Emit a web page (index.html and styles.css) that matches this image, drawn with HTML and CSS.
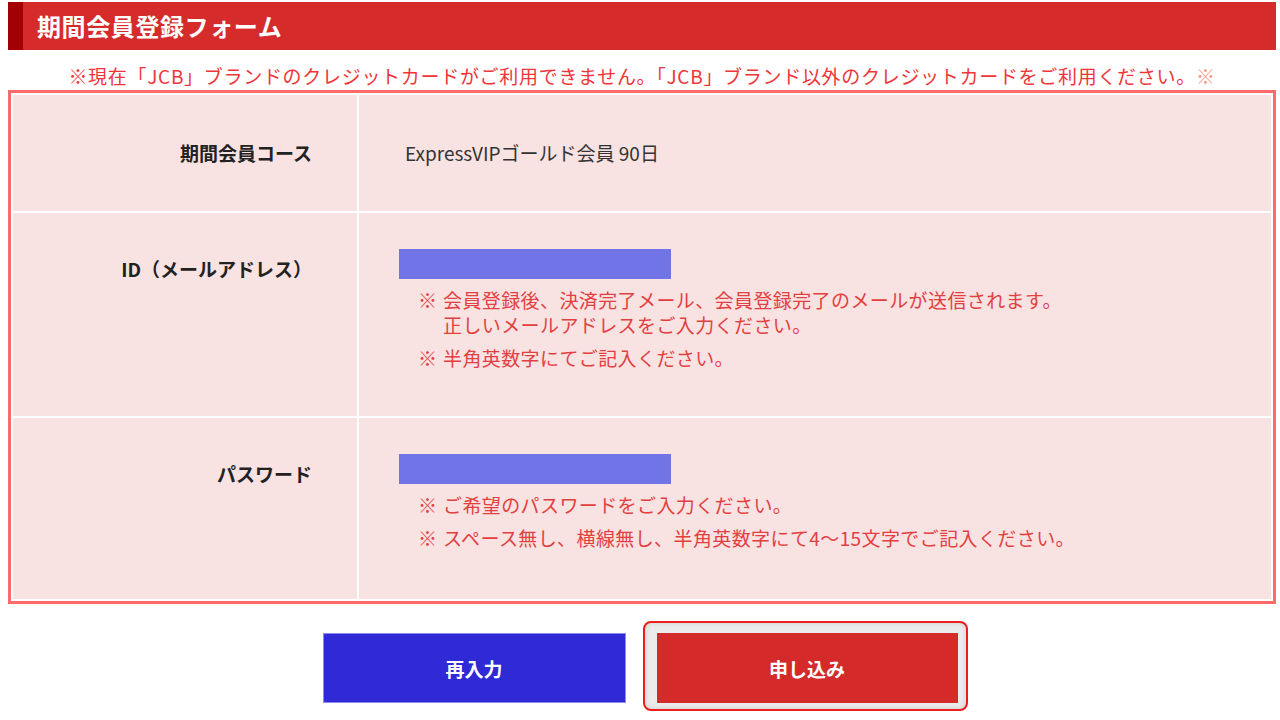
FILE: index.html
```html
<!DOCTYPE html>
<html lang="ja">
<head>
    <meta charset="UTF-8">
    <meta name="viewport" content="width=device-width, initial-scale=1.0">
    <title>期間会員登録フォーム</title>
    <link rel="stylesheet" href="styles.css">
</head>
<body>
    <div class="container">
        <h1 class="form-title">期間会員登録フォーム</h1>
        <p class="notice">※現在「JCB」ブランドのクレジットカードがご利用できません。「JCB」ブランド以外のクレジットカードをご利用ください。<span class="notice-end">※</span></p>
        <table class="form-table">
            <tr class="row-course">
                <th>期間会員コース</th>
                <td><span class="course">ExpressVIPゴールド会員 90日</span></td>
            </tr>
            <tr>
                <th>ID（メールアドレス）</th>
                <td>
                    <div class="masked"></div>
                    <ul class="notes">
                        <li><span class="mark">※</span><span>会員登録後、決済完了メール、会員登録完了のメールが送信されます。<br>正しいメールアドレスをご入力ください。</span></li>
                        <li><span class="mark">※</span><span>半角英数字にてご記入ください。</span></li>
                    </ul>
                </td>
            </tr>
            <tr class="row-last">
                <th>パスワード</th>
                <td>
                    <div class="masked"></div>
                    <ul class="notes">
                        <li><span class="mark">※</span><span>ご希望のパスワードをご入力ください。</span></li>
                        <li><span class="mark">※</span><span>スペース無し、横線無し、半角英数字にて4～15文字でご記入ください。</span></li>
                    </ul>
                </td>
            </tr>
        </table>
        <div class="buttons">
            <button class="btn btn-reset" type="button">再入力</button>
            <div class="btn-focus">
                <button class="btn btn-submit" type="button">申し込み</button>
            </div>
        </div>
    </div>
</body>
</html>
```

FILE: styles.css
```css
body {
    margin: 0;
    font-family: "Noto Sans CJK JP", "Noto Sans", sans-serif;
    background-color: #fff;
}
.container {
    width: 1268px;
    margin: 2px 0 0 8px;
}
.form-title {
    margin: 0;
    height: 48px;
    line-height: 48px;
    padding-left: 14px;
    border-left: 15px solid #a30006;
    background-color: #d62b2b;
    color: #fff;
    font-size: 24px;
    font-weight: 700;
    letter-spacing: 0.6px;
}
.notice {
    margin: 12px 0 0;
    line-height: 28px;
    text-align: center;
    font-size: 19px;
    letter-spacing: 0.7px;
    color: #f0353a;
}
.notice-end {
    color: #f7938a;
}
.form-table {
    width: 100%;
    border: 3px solid #ff6b6b;
    border-spacing: 2px;
    background-color: #fff;
}
.form-table th,
.form-table td {
    background-color: #f9e2e2;
    vertical-align: top;
}
.form-table th {
    width: 299px;
    padding: 42px 45px 0 0;
    text-align: right;
    font-size: 19px;
    line-height: 28px;
    font-weight: 700;
    color: #222;
}
.form-table td {
    padding: 36px 0 46px 40px;
    font-size: 19px;
    color: #333;
}
.row-course th {
    padding: 44px 45px 44px 0;
}
.row-course td {
    padding: 0 0 0 40px;
    vertical-align: middle;
}
.row-last td {
    padding-bottom: 49px;
}
.course {
    padding-left: 6px;
    line-height: 28px;
}
.masked {
    width: 272px;
    height: 30px;
    background-color: #7174e6;
}
.notes {
    list-style: none;
    margin: 0 0 0 19px;
    padding: 0;
    color: #e2403f;
    font-size: 19px;
    line-height: 25px;
    letter-spacing: 0.4px;
}
.notes li {
    display: flex;
    margin-top: 8px;
}
.notes .mark {
    flex: none;
    width: 25px;
}
.buttons {
    display: flex;
    justify-content: center;
    align-items: flex-start;
    gap: 17px;
    margin-top: 17px;
    padding-left: 6px;
}
.btn {
    width: 303px;
    height: 70px;
    border: 1px solid transparent;
    color: #fff;
    font-family: inherit;
    font-size: 19px;
    font-weight: 700;
    cursor: pointer;
}
.btn-reset {
    margin-top: 12px;
    background-color: #2f2ad5;
    border-color: #8f8cec;
}
.btn-focus {
    padding: 10px 8px 6px 12px;
    border: 2px solid #ee1c1c;
    border-radius: 8px;
    background-color: #ececec;
    box-shadow: inset 0 0 6px rgba(0, 0, 0, 0.12);
}
.btn-submit {
    display: block;
    width: 301px;
    background-color: #d42a2a;
}
```
